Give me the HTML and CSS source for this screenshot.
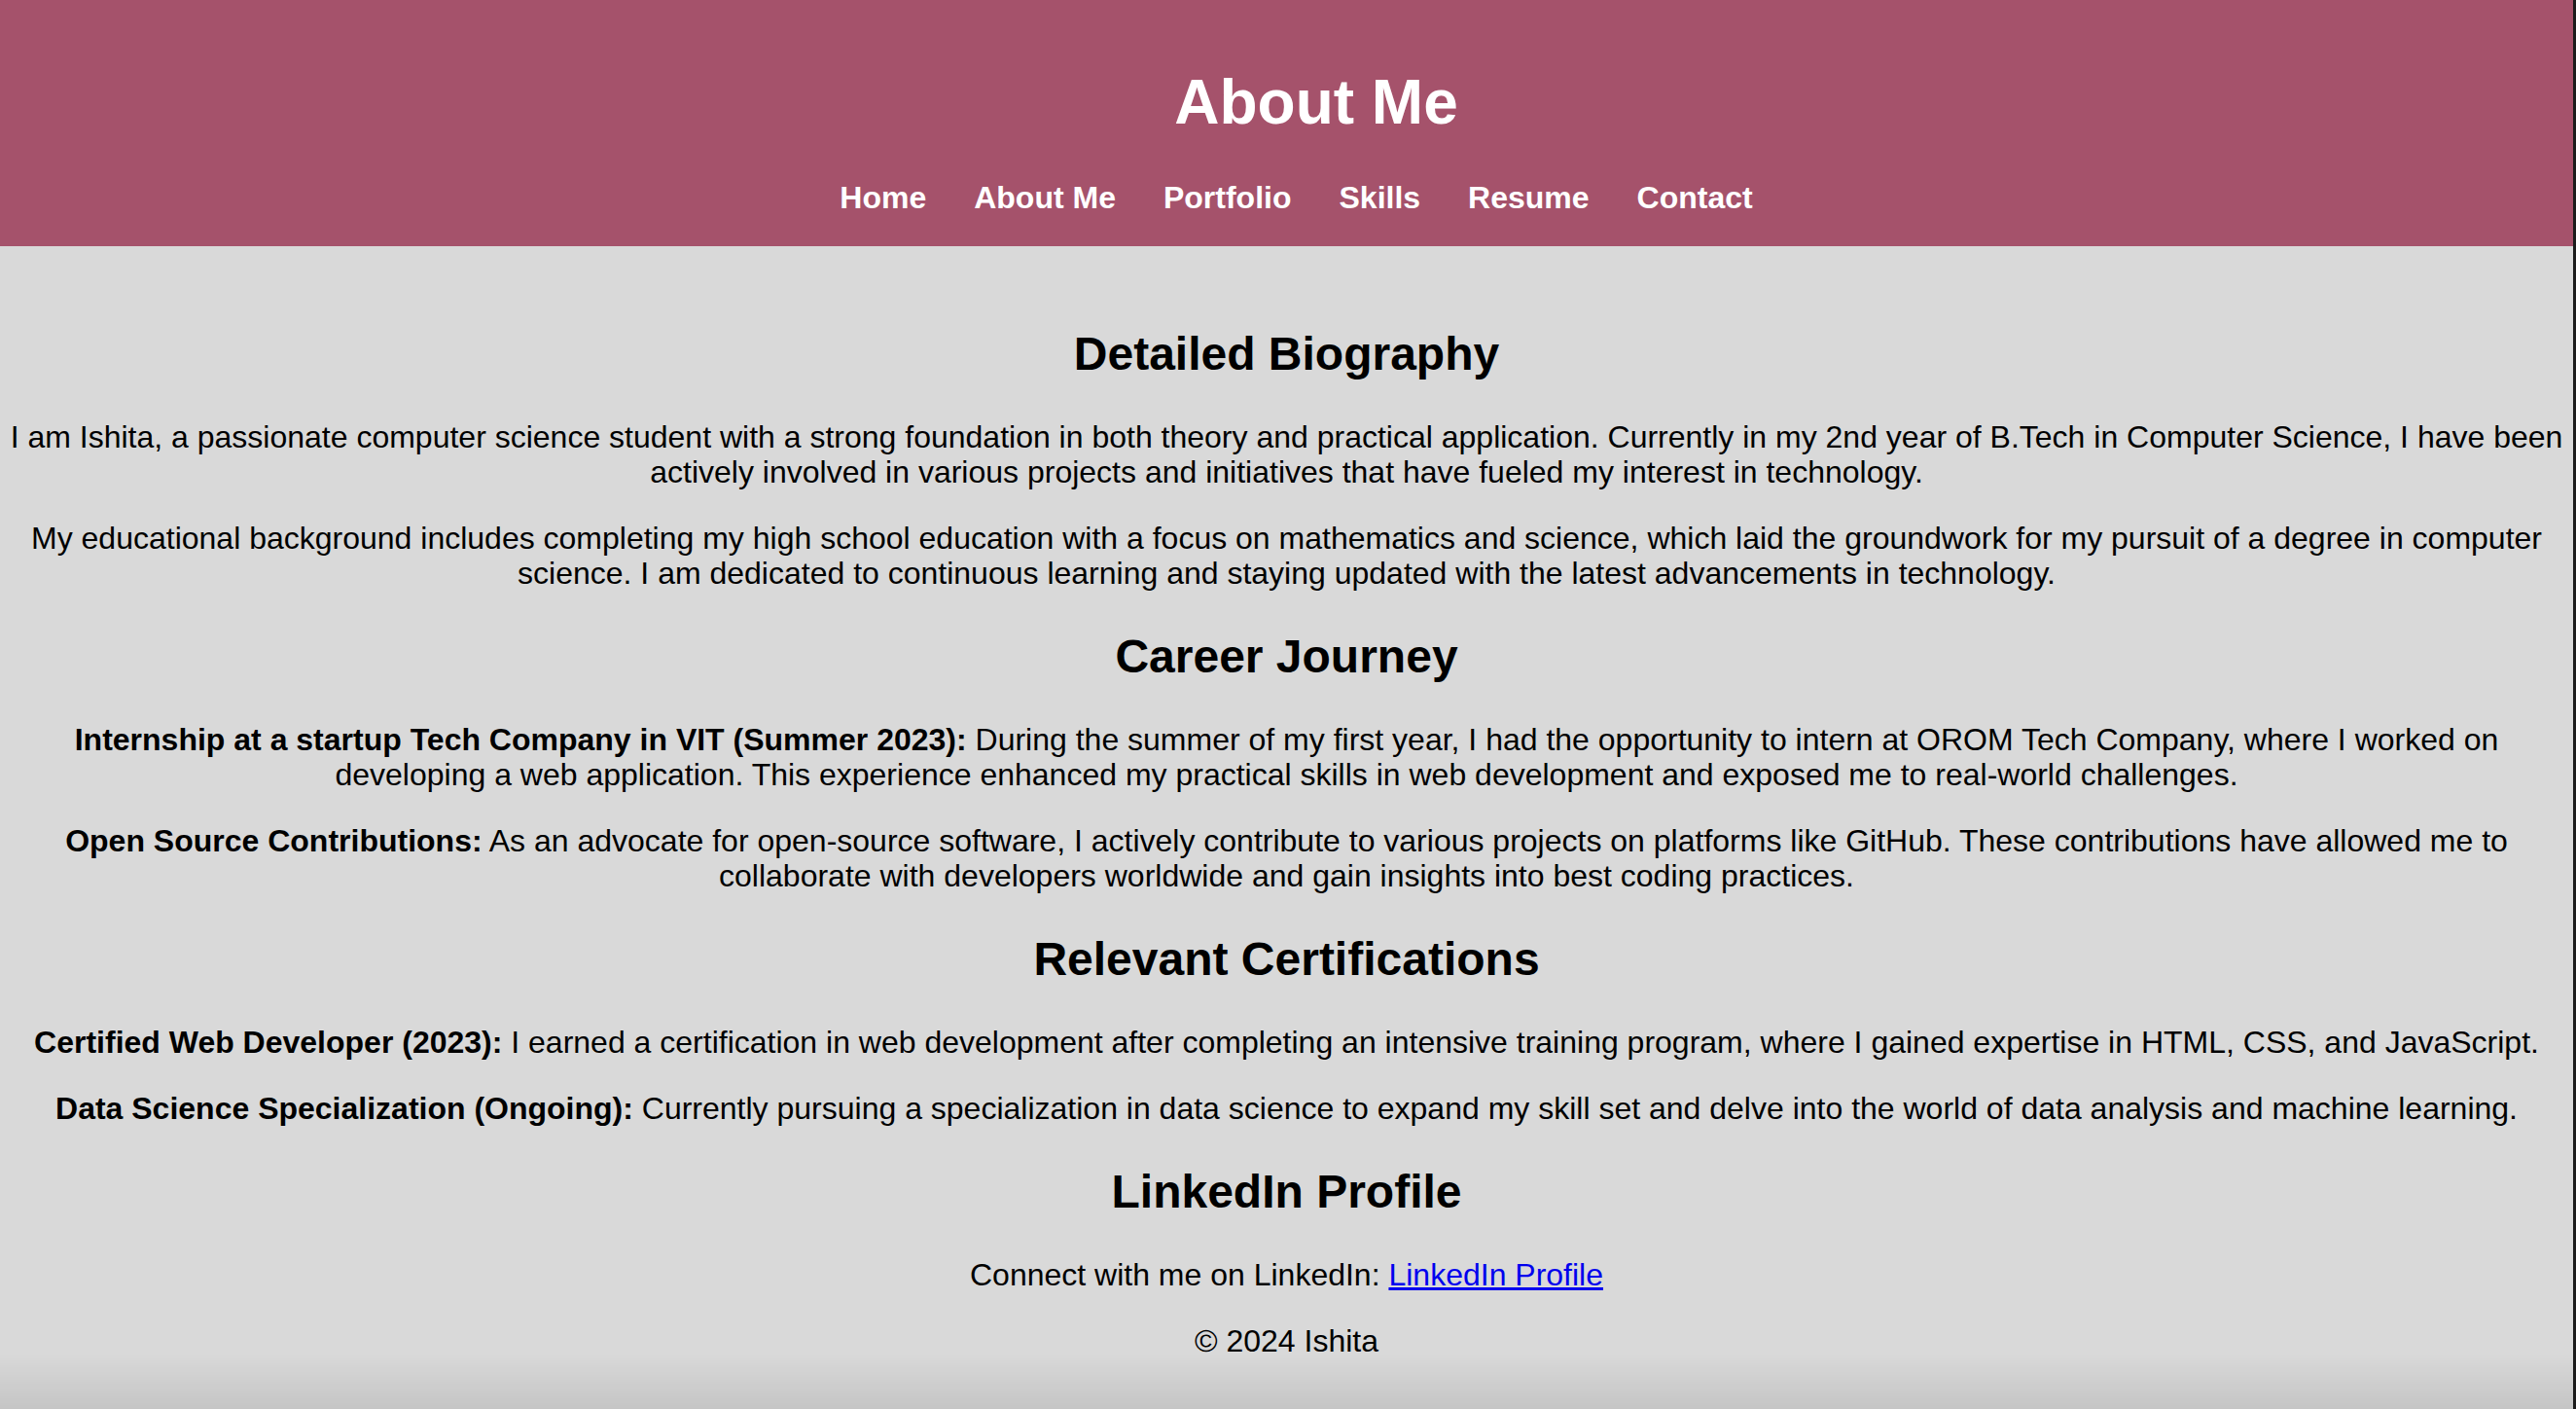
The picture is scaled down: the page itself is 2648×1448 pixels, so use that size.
FILE: index.html
```html
<!DOCTYPE html>
<html lang="en">
<head>
<meta charset="utf-8">
<title>About Me</title>
<link rel="stylesheet" href="styles.css">
</head>
<body>
<div class="page">
  <header class="site-header">
    <h1 class="site-title">About Me</h1>
    <nav class="site-nav">
      <a href="#">Home</a>
      <a href="#">About Me</a>
      <a href="#">Portfolio</a>
      <a href="#">Skills</a>
      <a href="#">Resume</a>
      <a href="#">Contact</a>
    </nav>
  </header>
  <main class="content">
    <section class="block">
      <h2 class="block-title">Detailed Biography</h2>
      <p>I am Ishita, a passionate computer science student with a strong foundation in both theory and practical application. Currently in my 2nd year of B.Tech in Computer Science, I have been actively involved in various projects and initiatives that have fueled my interest in technology.</p>
      <p>My educational background includes completing my high school education with a focus on mathematics and science, which laid the groundwork for my pursuit of a degree in computer science. I am dedicated to continuous learning and staying updated with the latest advancements in technology.</p>
    </section>
    <section class="block">
      <h2 class="block-title">Career Journey</h2>
      <p><strong>Internship at a startup Tech Company in VIT (Summer 2023):</strong> During the summer of my first year, I had the opportunity to intern at OROM Tech Company, where I worked on developing a web application. This experience enhanced my practical skills in web development and exposed me to real-world challenges.</p>
      <p><strong>Open Source Contributions:</strong> As an advocate for open-source software, I actively contribute to various projects on platforms like GitHub. These contributions have allowed me to collaborate with developers worldwide and gain insights into best coding practices.</p>
    </section>
    <section class="block">
      <h2 class="block-title">Relevant Certifications</h2>
      <p><strong>Certified Web Developer (2023):</strong> I earned a certification in web development after completing an intensive training program, where I gained expertise in HTML, CSS, and JavaScript.</p>
      <p><strong>Data Science Specialization (Ongoing):</strong> Currently pursuing a specialization in data science to expand my skill set and delve into the world of data analysis and machine learning.</p>
    </section>
    <section class="block">
      <h2 class="block-title">LinkedIn Profile</h2>
      <p>Connect with me on LinkedIn: <a class="text-link" href="#">LinkedIn Profile</a></p>
    </section>
    <footer class="site-footer">
      <p>&copy; 2024 Ishita</p>
    </footer>
  </main>
  <div class="bottom-shade"></div>
</div>
</body>
</html>
```

FILE: styles.css
```css
html {
  background: #1c1c1c;
  margin: 0;
  padding: 0;
}

body {
  margin: 0 3px 0 0;
  padding: 0;
  font-family: "Liberation Sans", Arial, Helvetica, sans-serif;
  font-size: 32px;
  color: #000;
  background: #d9d9d9;
  min-height: 100vh;
}

.page {
  min-height: 100vh;
}

.site-header {
  background: #a5526b;
  color: #fff;
  text-align: center;
  padding: 68px 0 31px;
}

.site-title {
  margin: 0 0 43px;
  padding-left: 61px;
  font-size: 64px;
  font-weight: bold;
  line-height: normal;
}

.site-nav {
  display: flex;
  justify-content: center;
  gap: 49px;
  padding-left: 20px;
}

.site-nav a {
  color: #fff;
  font-weight: bold;
  font-size: 32px;
  text-decoration: none;
  line-height: normal;
}

.content {
  padding: 43px 10px 0;
  text-align: center;
}

.block-title {
  font-size: 48px;
  font-weight: bold;
  margin: 40px 0;
  line-height: normal;
}

.content p {
  margin: 32px 0;
  line-height: 36px;
}

.text-link {
  color: #0000ee;
  text-decoration: underline;
}

.site-footer {
  text-align: center;
}

.bottom-shade {
  position: fixed;
  left: 0;
  right: 3px;
  bottom: 0;
  height: 56px;
  pointer-events: none;
  background: linear-gradient(to bottom, rgba(0, 0, 0, 0), rgba(0, 0, 0, 0.09));
}
```
